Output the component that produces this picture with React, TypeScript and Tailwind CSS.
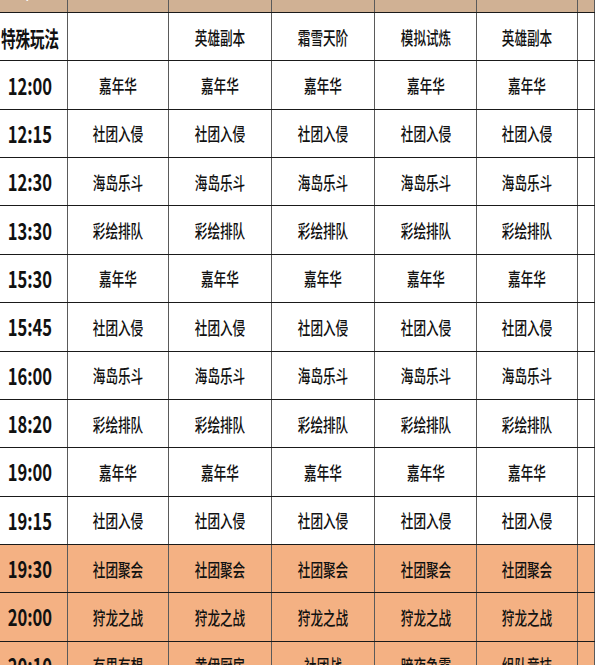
import React from "react";

const cols = ["w-[76px]", "w-[101px]", "w-[103px]", "w-[103px]", "w-[102px]", "w-[101px]", "flex-1"];

type Row = { time: string; cells: string[]; orange?: boolean };

const rows: Row[] = [
  { time: "特殊玩法", cells: ["", "英雄副本", "霜雪天阶", "模拟试炼", "英雄副本", ""] },
  { time: "12:00", cells: ["嘉年华", "嘉年华", "嘉年华", "嘉年华", "嘉年华", ""] },
  { time: "12:15", cells: ["社团入侵", "社团入侵", "社团入侵", "社团入侵", "社团入侵", ""] },
  { time: "12:30", cells: ["海岛乐斗", "海岛乐斗", "海岛乐斗", "海岛乐斗", "海岛乐斗", ""] },
  { time: "13:30", cells: ["彩绘排队", "彩绘排队", "彩绘排队", "彩绘排队", "彩绘排队", ""] },
  { time: "15:30", cells: ["嘉年华", "嘉年华", "嘉年华", "嘉年华", "嘉年华", ""] },
  { time: "15:45", cells: ["社团入侵", "社团入侵", "社团入侵", "社团入侵", "社团入侵", ""] },
  { time: "16:00", cells: ["海岛乐斗", "海岛乐斗", "海岛乐斗", "海岛乐斗", "海岛乐斗", ""] },
  { time: "18:20", cells: ["彩绘排队", "彩绘排队", "彩绘排队", "彩绘排队", "彩绘排队", ""] },
  { time: "19:00", cells: ["嘉年华", "嘉年华", "嘉年华", "嘉年华", "嘉年华", ""] },
  { time: "19:15", cells: ["社团入侵", "社团入侵", "社团入侵", "社团入侵", "社团入侵", ""] },
  { time: "19:30", cells: ["社团聚会", "社团聚会", "社团聚会", "社团聚会", "社团聚会", ""], orange: true },
  { time: "20:00", cells: ["狩龙之战", "狩龙之战", "狩龙之战", "狩龙之战", "狩龙之战", ""], orange: true },
  { time: "20:10", cells: ["有思有想", "黄伊厨房", "社团战", "暗夜争霸", "组队竞技", ""], orange: true },
];

const header = ["时间/星期", "周一", "周二", "周三", "周四", "周五", ""];

const font = { fontFamily: '"Noto Sans CJK SC", "Noto Sans", sans-serif' };

export default function App() {
  return (
    <div className="w-[595px] h-[665px] overflow-hidden bg-white" style={font}>
      <div className="-ml-[8px] -mt-[36px] flex flex-col">
        <div className="flex h-[49px] bg-[#d0b194] border-b border-[#1a1a1a]">
          {header.map((h, i) => (
            <div
              key={i}
              className={`${cols[i]} shrink-0 flex items-end justify-center pb-[14px] border-r border-[#5a5a5a]`}
            >
              <span className="inline-block scale-x-[0.68] text-[22px] leading-none font-bold text-white whitespace-nowrap">
                {h}
              </span>
            </div>
          ))}
        </div>
        {rows.map((r, ri) => (
          <div
            key={ri}
            className={`flex h-[48.36px] shrink-0 border-b border-[#1a1a1a] ${r.orange ? "bg-[#f4b183]" : "bg-white"}`}
          >
            <div className={`${cols[0]} shrink-0 flex items-center justify-center border-r border-[#5a5a5a]`}>
              <span
                className={`inline-block whitespace-nowrap font-bold text-[#111] leading-none ${
                  r.time.includes(":") ? "text-[23px] scale-x-[0.72]" : "text-[22px] scale-x-[0.66]"
                }`}
              >
                {r.time}
              </span>
            </div>
            {r.cells.map((c, ci) => (
              <div
                key={ci}
                className={`${cols[ci + 1]} shrink-0 flex items-center justify-center border-r border-[#5a5a5a]`}
              >
                <span className="inline-block whitespace-nowrap text-[18px] leading-none font-medium text-[#111] scale-x-[0.7]">
                  {c}
                </span>
              </div>
            ))}
          </div>
        ))}
      </div>
    </div>
  );
}
